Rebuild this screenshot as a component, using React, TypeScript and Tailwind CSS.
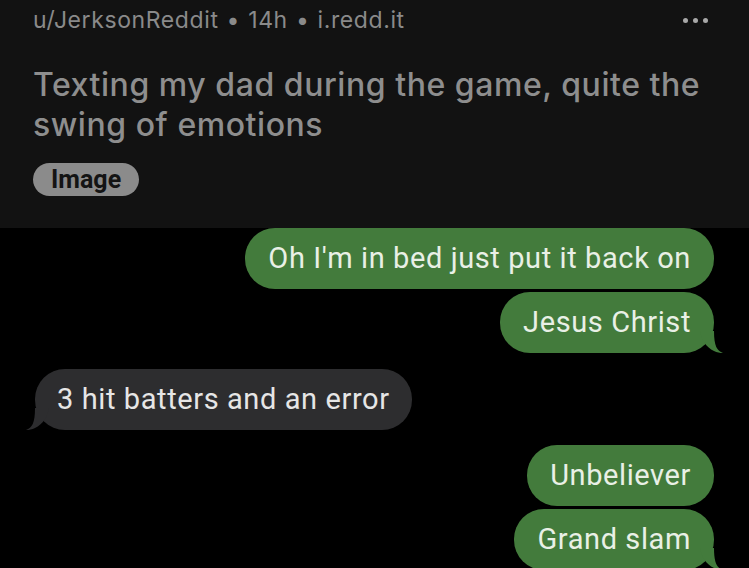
import React from "react";

const SentTail = () => (
  <svg className="absolute right-[-10px] bottom-0" width="24" height="22" viewBox="0 0 24 22">
    <path d="M0 0 C2 10 6 16 14 20 C17 21.5 20 22 23 22 C17 20 14 15 14 0 Z" fill="#437b3c" />
  </svg>
);

const RecvTail = () => (
  <svg className="absolute left-[-10px] bottom-0" width="24" height="22" viewBox="0 0 24 22">
    <path d="M24 0 C22 10 18 16 10 20 C7 21.5 4 22 1 22 C7 20 10 15 10 0 Z" fill="#2d2d2f" />
  </svg>
);

function Sent({ text, tail, className = "" }: { text: string; tail?: boolean; className?: string }) {
  return (
    <div className={"flex justify-end " + className}>
      <div className="relative h-[61px] rounded-[30px] bg-[#437b3c] px-[23px] flex items-center text-[29px] text-[#e9f0e6] tracking-[0.6px]">
        {tail && <SentTail />}
        <span className="relative">{text}</span>
      </div>
    </div>
  );
}

export default function App() {
  return (
    <div className="w-[749px] h-[568px] overflow-hidden bg-black font-['Roboto',sans-serif]">
      <div className="h-[228px] bg-[#121212] pl-[33px] pr-[41px] pt-[5px] font-['Inter',sans-serif]">
        <div className="flex items-center justify-between h-[30px]">
          <div className="text-[23px] leading-[30px] text-[#8a8a8a] tracking-[0.6px]">
            u/JerksonReddit <span className="mx-[1px]">•</span> 14h <span className="mx-[1px]">•</span> i.redd.it
          </div>
          <div className="flex gap-[5px]">
            <span className="w-[5px] h-[5px] rounded-full bg-[#a8a8a8]" />
            <span className="w-[5px] h-[5px] rounded-full bg-[#a8a8a8]" />
            <span className="w-[5px] h-[5px] rounded-full bg-[#a8a8a8]" />
          </div>
        </div>
        <h1 className="mt-[30px] text-[32px] leading-[40px] font-medium text-[#8e8e8e] tracking-[0.55px]">
          Texting my dad during the game, quite the
          <br />
          swing of emotions
        </h1>
        <div className="mt-[18px] inline-flex h-[33px] items-center rounded-full bg-[#8b8b8b] px-[18px] text-[25px] font-bold text-[#141414] font-['Roboto',sans-serif]">
          Image
        </div>
      </div>
      <div className="flex flex-col pl-[35px] pr-[35px]">
        <Sent text="Oh I'm in bed just put it back on" />
        <Sent text="Jesus Christ" tail className="mt-[3px]" />
        <div className="flex justify-start mt-[16px]">
          <div className="relative h-[61px] rounded-[30px] bg-[#2d2d2f] px-[22px] flex items-center text-[29px] text-[#e6e6e6] tracking-[0.6px]">
            <RecvTail />
            <span className="relative">3 hit batters and an error</span>
          </div>
        </div>
        <Sent text="Unbeliever" className="mt-[15px]" />
        <Sent text="Grand slam" tail className="mt-[3px]" />
      </div>
    </div>
  );
}
